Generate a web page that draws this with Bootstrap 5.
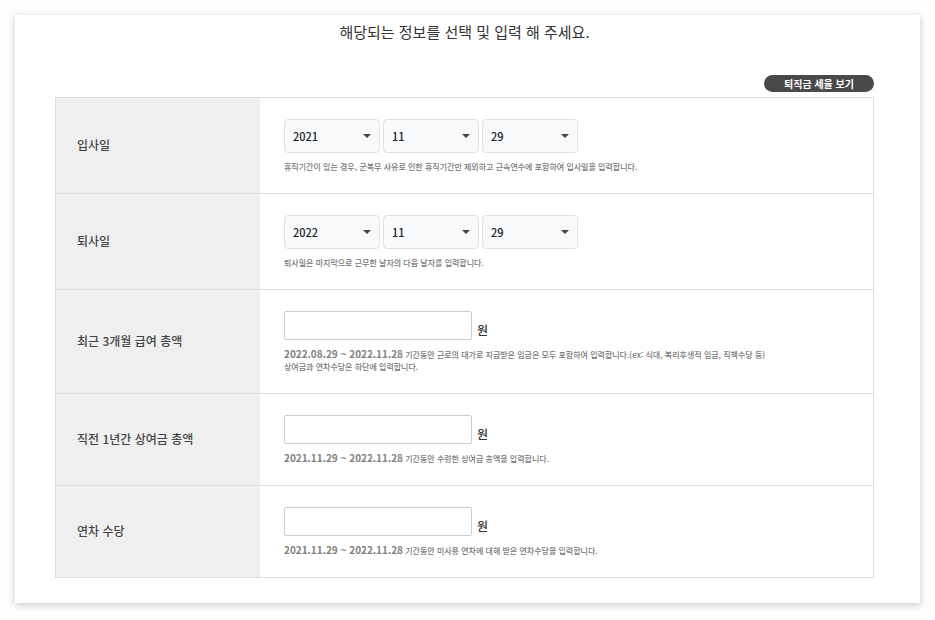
<!DOCTYPE html>
<html lang="ko">
<head>
<meta charset="utf-8">
<meta name="viewport" content="width=device-width, initial-scale=1">
<title>퇴직금 계산</title>
<link href="https://cdn.jsdelivr.net/npm/bootstrap@5.3.0/dist/css/bootstrap.min.css" rel="stylesheet">
<style>
body { background: #fefefe; padding: 15px; font-family: "Noto Sans CJK KR", "Noto Sans", sans-serif; font-size: 12px; color: #333; }
.panel { background: #fff; padding: 5px 46px 25px 40px; box-shadow: 0 2px 8px rgba(0, 0, 0, .22); }
.panel-title { font-size: 15px; line-height: 24px; font-weight: 400; margin: 0 0 31px; }
.rate-btn { background: #4a4a4a; color: #fff; font-size: 10px; line-height: 17px; font-weight: 700; width: 110px; padding: 0; border: 0; margin-bottom: 5px; }
.rate-btn:hover { background: #333; color: #fff; }
.calc-table { border: 1px solid #ddd; }
.calc-table th, .calc-table td { border-bottom: 1px solid #ddd; vertical-align: middle; }
.calc-table tr:last-child > * { border-bottom: 0; }
.calc-table th { width: 25%; background: #efefef; padding: 0 21px 2px; font-weight: 500; color: #444; }
.calc-table td { padding: 21px 24px 20px; }
.date-select { width: 96px; height: 34px; padding: 0 24px 0 8px; font-size: 11px; font-weight: 500; color: #222; border: 1px solid #e0e0e0; border-radius: 4px; background-color: #f8f9fb; background-size: 8px 4px; background-position: right 8px center; background-image: url("data:image/svg+xml,%3Csvg xmlns='http://www.w3.org/2000/svg' viewBox='0 0 8 4'%3E%3Cpath fill='%23444' d='M0 0h8L4 4z'/%3E%3C/svg%3E"); }
.date-group { gap: 3px; }
.money-group { gap: 5px; line-height: 20px; font-weight: 500; }
.money-input { width: 188px; height: 29px; padding: 0 8px; font-size: 12px; border: 1px solid #ccc; border-radius: 2px; }
.hint { font-size: 8px; line-height: 12px; font-weight: 500; color: #777; margin: 9px 0 0; }
.date-group + .hint { margin-top: 8px; }
.hint strong { font-size: 10px; line-height: 10px; color: #808080; }
</style>
<script src="https://cdn.jsdelivr.net/npm/bootstrap@5.3.0/dist/js/bootstrap.bundle.min.js"></script>
</head>
<body>
<main class="panel">
  <h1 class="panel-title text-center">해당되는 정보를 선택 및 입력 해 주세요.</h1>
  <div class="d-flex justify-content-end">
    <button type="button" class="btn rate-btn rounded-pill">퇴직금 세율 보기</button>
  </div>
  <form>
    <table class="calc-table w-100">
      <tbody>
        <tr>
          <th scope="row"><label for="joinYear">입사일</label></th>
          <td>
            <div class="d-flex date-group">
              <select class="form-select date-select" id="joinYear"><option>2021</option></select>
              <select class="form-select date-select" aria-label="입사 월"><option>11</option></select>
              <select class="form-select date-select" aria-label="입사 일"><option>29</option></select>
            </div>
            <p class="hint">휴직기간이 있는 경우, 군복무 사유로 인한 휴직기간만 제외하고 근속연수에 포함하여 입사일을 입력합니다.</p>
          </td>
        </tr>
        <tr>
          <th scope="row"><label for="leaveYear">퇴사일</label></th>
          <td>
            <div class="d-flex date-group">
              <select class="form-select date-select" id="leaveYear"><option>2022</option></select>
              <select class="form-select date-select" aria-label="퇴사 월"><option>11</option></select>
              <select class="form-select date-select" aria-label="퇴사 일"><option>29</option></select>
            </div>
            <p class="hint">퇴사일은 마지막으로 근무한 날자의 다음 날자를 입력합니다.</p>
          </td>
        </tr>
        <tr>
          <th scope="row"><label for="salary">최근 3개월 급여 총액</label></th>
          <td>
            <div class="d-flex align-items-end money-group">
              <input type="text" class="form-control money-input" id="salary"><span>원</span>
            </div>
            <p class="hint"><strong>2022.08.29 ~ 2022.11.28</strong> 기간동안 근로의 대가로 지급받은 임금은 모두 포함하여 입력합니다.(ex: 식대, 복리후생적 임금, 직책수당 등)<br>상여금과 연차수당은 하단에 입력합니다.</p>
          </td>
        </tr>
        <tr>
          <th scope="row"><label for="bonus">직전 1년간 상여금 총액</label></th>
          <td>
            <div class="d-flex align-items-end money-group">
              <input type="text" class="form-control money-input" id="bonus"><span>원</span>
            </div>
            <p class="hint"><strong>2021.11.29 ~ 2022.11.28</strong> 기간동안 수령한 상여금 총액을 입력합니다.</p>
          </td>
        </tr>
        <tr>
          <th scope="row"><label for="leavePay">연차 수당</label></th>
          <td>
            <div class="d-flex align-items-end money-group">
              <input type="text" class="form-control money-input" id="leavePay"><span>원</span>
            </div>
            <p class="hint"><strong>2021.11.29 ~ 2022.11.28</strong> 기간동안 미사용 연차에 대해 받은 연차수당을 입력합니다.</p>
          </td>
        </tr>
      </tbody>
    </table>
  </form>
</main>
</body>
</html>
